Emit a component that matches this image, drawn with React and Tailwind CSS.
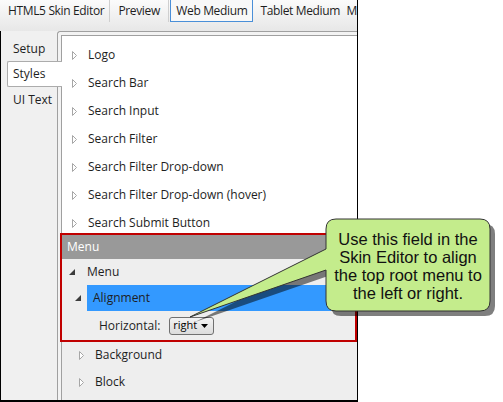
const ui = { fontFamily: '"Open Sans", "Noto Sans", sans-serif' };

const Closed = () => (
  <svg width="6" height="9" viewBox="0 0 6 9" className="shrink-0">
    <polygon points="0.5,0.5 4.5,4.5 0.5,8.5" fill="#ffffff" stroke="#a6a6a6" strokeWidth="1" />
  </svg>
);

const Open = () => (
  <svg width="6" height="6" viewBox="0 0 6 6" className="shrink-0">
    <polygon points="6,0 6,6 0,6" fill="#3c3c3c" />
  </svg>
);

const topItems = [
  'Logo',
  'Search Bar',
  'Search Input',
  'Search Filter',
  'Search Filter Drop-down',
  'Search Filter Drop-down (hover)',
  'Search Submit Button',
];

function TabBar() {
  return (
    <div className="h-[31px] flex items-start bg-gradient-to-b from-[#fbfbfb] to-[#e7e7e7] text-[12px] tracking-[-0.35px] text-[#1e1e1e] overflow-hidden">
      <div className="w-[110px] h-[22px] flex items-center pl-[8px] whitespace-nowrap">HTML5 Skin Editor</div>
      <div className="w-px h-[22px] bg-[#cfcfcf]" />
      <div className="w-[59px] h-[22px] flex items-center justify-center">Preview</div>
      <div className="w-px h-[22px] bg-[#cfcfcf]" />
      <div className="ml-px w-[84px] h-[22px] flex items-center justify-center border border-t-0 border-[#4a8fd8] bg-[#f8f8f8] whitespace-nowrap">
        Web Medium
      </div>
      <div className="w-[94px] h-[22px] flex items-center pl-[7px] whitespace-nowrap">Tablet Medium</div>
      <div className="h-[22px] flex items-center">M</div>
    </div>
  );
}

function Sidebar() {
  return (
    <div className="w-[56px] bg-[#f0f0f0] pt-[4px] text-[12px] text-[#1e1e1e] relative z-10">
      <div className="h-[26px] flex items-center pl-[12px] pt-px">Setup</div>
      <div className="h-[26px] ml-[6px] -mr-[5px] flex items-center pl-[5px] bg-white border border-r-0 border-[#acacac] rounded-l-[2px]">
        Styles
      </div>
      <div className="h-[26px] flex items-center pl-[12px]">UI Text</div>
    </div>
  );
}

function StyleTree() {
  return (
    <div className="flex-1 border-l border-t border-[#a0a0a0] bg-[#eeeeee] flex flex-col text-[12px] text-[#1e1e1e]">
      <div className="bg-white pt-[5px]">
        {topItems.map((label) => (
          <div key={label} className="h-[28px] flex items-center pl-[10px] gap-[10px] whitespace-nowrap">
            <Closed />
            <span>{label}</span>
          </div>
        ))}
      </div>

      <div className="-mt-[4px] -ml-[2px] border-2 border-[#c00000] bg-[#eeeeee]">
        <div className="h-[24px] bg-[#999999] text-white flex items-center pl-[5px]">Menu</div>
        <div className="h-[26px] flex items-center pl-[7px] gap-[12px]">
          <Open />
          <span>Menu</span>
        </div>
        <div className="h-[26px] flex items-center pl-[13px]">
          <Open />
          <div className="ml-[6px] flex-1 h-full bg-[#3399ff] flex items-center pl-[6px]">Alignment</div>
        </div>
        <div className="h-[29px] flex items-center pl-[37px]">
          <span>Horizontal:</span>
          <div className="ml-[9px] w-[45px] h-[18px] border border-[#707070] rounded-[3px] bg-gradient-to-b from-[#f3f3f3] to-[#dcdcdc] flex items-center pl-[3px] pr-[5px] justify-between text-[11px] text-black">
            <span className="-mt-px">right</span>
            <svg width="7" height="4" viewBox="0 0 7 4">
              <polygon points="0,0 7,0 3.5,4" fill="#000" />
            </svg>
          </div>
        </div>
      </div>

      <div className="h-[26px] flex items-center pl-[17px] gap-[10px]">
        <Closed />
        <span>Background</span>
      </div>
      <div className="h-[28px] flex items-center pl-[17px] gap-[10px]">
        <Closed />
        <span>Block</span>
      </div>
    </div>
  );
}

function Callout() {
  const shape =
    'M336,219 H480 Q490,219 490,229 V301 Q490,311 480,311 H336 Q326,311 326,301 V270 L190,317 L326,249 V229 Q326,219 336,219 Z';
  return (
    <>
      <svg className="absolute left-0 top-0 pointer-events-none" width="503" height="402" viewBox="0 0 503 402">
        <path d={shape} transform="translate(5,5)" fill="#000" fillOpacity="0.5" />
        <path d={shape} fill="#c4ec8c" stroke="#333" strokeWidth="1" />
      </svg>
      <div
        className="absolute left-[326px] top-[220px] w-[164px] h-[92px] flex items-center justify-center text-center text-[16.5px] leading-[18px] text-[#111] whitespace-nowrap"
        style={{ fontFamily: '"Liberation Sans", Arial, sans-serif' }}
      >
        Use this field in the
        <br />
        Skin Editor to align
        <br />
        the top root menu to
        <br />
        the left or right.
      </div>
    </>
  );
}

export default function App() {
  return (
    <div className="relative w-[503px] h-[402px] bg-white overflow-hidden" style={ui}>
      <div className="w-[358px] h-[402px] flex flex-col border-r border-b-2 border-black">
        <TabBar />
        <div className="flex-1 flex border-l border-black">
          <Sidebar />
          <div className="flex-1 flex border-l border-t border-[#a0a0a0] rounded-tl-[3px] bg-[#f3f3f3] pl-[3px] pt-[3px]">
            <StyleTree />
          </div>
        </div>
      </div>
      <Callout />
    </div>
  );
}
